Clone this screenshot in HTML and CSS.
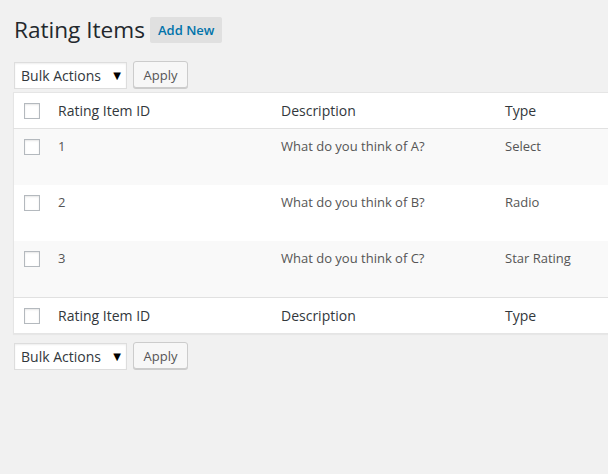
FILE: index.html
```html
<!DOCTYPE html>
<html>
<head>
<meta charset="utf-8">
<link rel="stylesheet" href="styles.css">
</head>
<body>
<div class="wrap">
  <div class="title-row">
    <h1 class="title">Rating Items</h1>
    <a class="add-new">Add New</a>
  </div>
  <div class="tablenav top">
    <div class="select"><span>Bulk Actions</span><span class="arrow">▼</span></div>
    <button class="apply">Apply</button>
  </div>
  <table class="list">
    <thead>
      <tr><th class="cb"><span class="box"></span></th><th class="c-id">Rating Item ID</th><th class="c-desc">Description</th><th class="c-type">Type</th></tr>
    </thead>
    <tbody>
      <tr class="alt"><td class="cb"><span class="box"></span></td><td>1</td><td>What do you think of A?</td><td>Select</td></tr>
      <tr><td class="cb"><span class="box"></span></td><td>2</td><td>What do you think of B?</td><td>Radio</td></tr>
      <tr class="alt"><td class="cb"><span class="box"></span></td><td>3</td><td>What do you think of C?</td><td>Star Rating</td></tr>
    </tbody>
    <tfoot>
      <tr><th class="cb"><span class="box"></span></th><th>Rating Item ID</th><th>Description</th><th>Type</th></tr>
    </tfoot>
  </table>
  <div class="tablenav bottom">
    <div class="select"><span>Bulk Actions</span><span class="arrow">▼</span></div>
    <button class="apply">Apply</button>
  </div>
</div>
</body>
</html>
```
FILE: styles.css
```css
html, body {
  margin: 0;
  padding: 0;
  background: #f1f1f1;
  overflow: hidden;
  font-family: "Open Sans", sans-serif;
  color: #444;
}
.wrap {
  padding: 0 0 0 13px;
  width: 800px;
}
.title-row {
  display: flex;
  align-items: center;
  gap: 5px;
  padding-top: 13px;
  height: 34px;
}
.title {
  margin: 0 0 0 1px;
  font-size: 22.6px;
  font-weight: 400;
  color: #23282d;
  line-height: 34px;
}
.add-new {
  display: block;
  background: #e0e0e0;
  color: #0073aa;
  font-size: 13px;
  font-weight: 600;
  border-radius: 2px;
  padding: 0 8px;
  height: 26px;
  line-height: 26px;
}
.tablenav {
  display: flex;
  gap: 6px;
  padding-left: 1px;
  height: 28px;
  align-items: center;
}
.tablenav.top { margin-top: 14px; }
.tablenav.bottom { margin-top: 8px; }
.select {
  box-sizing: border-box;
  width: 113px;
  height: 27px;
  background: #fff;
  border: 1px solid #ddd;
  box-shadow: inset 0 1px 2px rgba(0,0,0,.07);
  display: flex;
  align-items: center;
  justify-content: space-between;
  padding: 0 5px 0 6px;
  font-size: 14px;
  color: #32373c;
}
.arrow {
  font-size: 10px;
  color: #000;
  font-family: "DejaVu Sans", sans-serif;
}
.apply {
  box-sizing: border-box;
  height: 27px;
  width: 55px;
  background: #f7f7f7;
  border: 1px solid #ccc;
  border-radius: 3px;
  box-shadow: 0 1px 0 #ccc;
  font-family: "Open Sans", sans-serif;
  font-size: 13px;
  color: #555;
  padding: 0;
  margin-top: -1px;
}
.list {
  margin-top: 3px;
  width: 760px;
  border-collapse: collapse;
  background: #fff;
  border: 1px solid #e5e5e5;
  box-shadow: 0 1px 1px rgba(0,0,0,.04);
  table-layout: fixed;
}
.list th {
  text-align: left;
  font-weight: 400;
  font-size: 14px;
  color: #32373c;
  padding: 0 10px;
  height: 34px;
  line-height: 20px;
  vertical-align: middle;
}
.list thead th { border-bottom: 1px solid #e1e1e1; }
.list tfoot th { border-top: 1px solid #e1e1e1; height: 34px; }
.list td {
  font-size: 13px;
  color: #555;
  padding: 8px 10px 0;
  height: 46px;
  line-height: 19px;
  vertical-align: top;
}
.list tr.alt td { background: #f9f9f9; }
.list .cb {
  width: 24px;
  padding: 0 0 0 10px;
}
.list td.cb { padding-top: 10px; }
.list thead .cb, .list tfoot .cb { padding-top: 1px; }
.c-id { width: 203px; }
.c-desc { width: 204px; }
.box {
  display: block;
  box-sizing: border-box;
  width: 16px;
  height: 16px;
  border: 1px solid #b4b9be;
  background: #fff;
  box-shadow: inset 0 1px 2px rgba(0,0,0,.1);
}
```
